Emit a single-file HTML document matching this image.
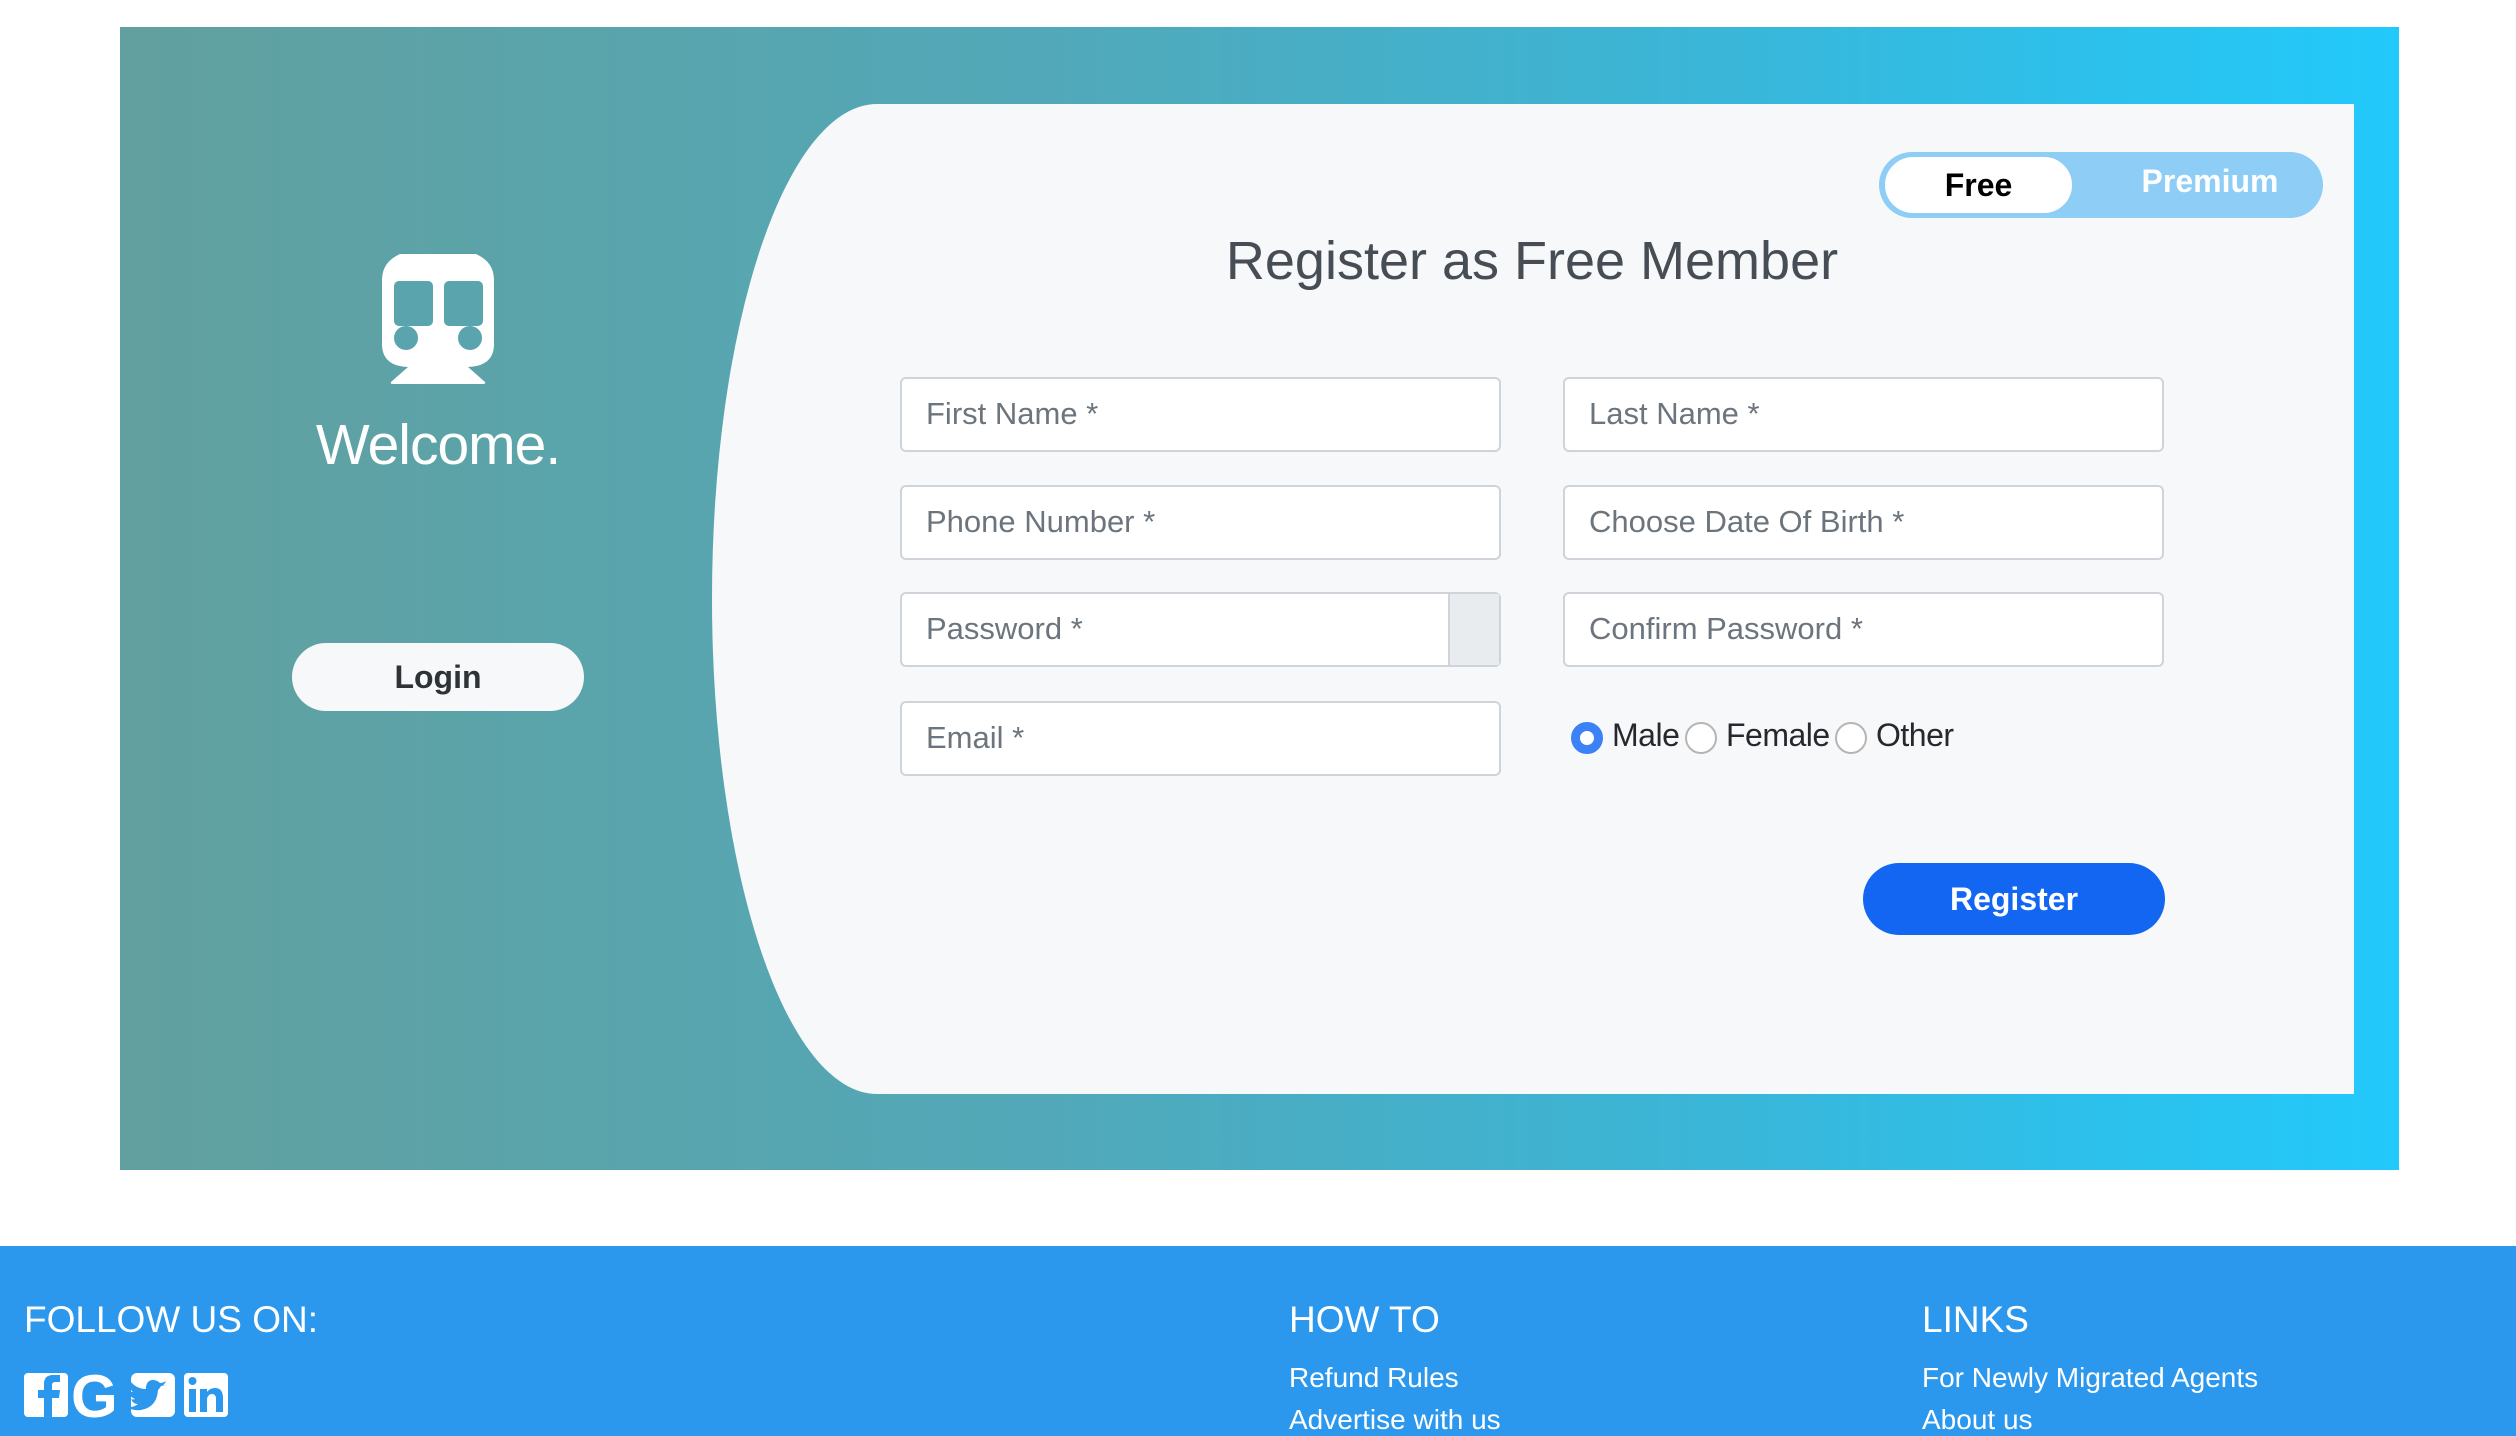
<!DOCTYPE html>
<html><head><meta charset="utf-8"><style>
*{box-sizing:border-box;margin:0;padding:0}
body{width:2516px;height:1436px;background:#fff;font-family:"Liberation Sans",sans-serif;position:relative;overflow:hidden}
.banner{position:absolute;left:120px;top:27px;width:2279px;height:1143px;background:linear-gradient(90deg,#62a09f 0%,#52a8b8 40%,#3ab6d8 70%,#22c9fb 100%)}
.card{position:absolute;left:712px;top:104px;width:1642px;height:990px;background:#f7f8fa;border-top-left-radius:165px 495px;border-bottom-left-radius:165px 495px}
.abs{position:absolute}
.welcome{left:238px;top:412px;width:400px;text-align:center;color:#fff;font-size:57px;font-weight:300;letter-spacing:-1px}
.login{left:292px;top:643px;width:292px;height:68px;border-radius:34px;background:#f7f8fa;color:#2e3338;font-weight:bold;font-size:32px;text-align:center;line-height:68px}
.toggle{left:1879px;top:152px;width:444px;height:66px;border-radius:33px;background:#8dcdf6}
.free{left:1882px;top:154px;width:193px;height:62px;border-radius:31px;background:#fff;border:3px solid #8dcdf6;text-align:center;line-height:56px;font-weight:bold;font-size:32px;color:#000}
.prem{left:2110px;top:150px;width:200px;line-height:62px;font-weight:bold;font-size:32px;color:#fff;text-align:center}
.title{left:1032px;top:230px;width:1000px;text-align:center;font-size:54px;color:#474d55;font-weight:300}
.inp{position:absolute;height:75px;width:601px;background:#fff;border:2px solid #ced4da;border-radius:6px;font-size:31px;color:#6c757d;padding-left:24px;line-height:69px}
.c1{left:900px}.c2{left:1563px}
.addon{position:absolute;right:0;top:0;width:51px;height:71px;background:#e9ecef;border-left:2px solid #ced4da}
.radio{position:absolute;top:720px;width:32px;height:32px;border-radius:50%;border:2px solid #b5b5b5;background:#fff}
.rl{position:absolute;top:717px;font-size:32px;color:#25292e;letter-spacing:-0.5px}
.reg{left:1863px;top:863px;width:302px;height:72px;border-radius:36px;background:#1266f1;color:#fff;font-weight:bold;font-size:32px;text-align:center;line-height:72px}
.footer{position:absolute;left:0;top:1246px;width:2516px;height:190px;background:#2b98ee;color:#fff}
.fh{position:absolute;top:53px;font-size:37px;font-weight:300}
.fl{position:absolute;font-size:28px;font-weight:300}
</style></head><body>
<div class="banner"></div>
<div class="card"></div>
<svg class="abs" style="left:382px;top:254px" width="112" height="130" viewBox="0 0 112 130">
<path fill="#fff" d="M18 0H94Q112 8 112 26V90Q112 112 86 113L103 128Q104 130 101 130H11Q8 130 9 128L26 113Q0 112 0 90V26Q0 8 18 0Z"/>
<rect x="12" y="27" width="39" height="45" rx="5" fill="#5aa4ad"/>
<rect x="62" y="27" width="39" height="45" rx="5" fill="#5aa4ad"/>
<circle cx="24" cy="84" r="12" fill="#5aa4ad"/>
<circle cx="88" cy="84" r="12" fill="#5aa4ad"/>
</svg>
<div class="abs welcome">Welcome.</div>
<div class="abs login">Login</div>
<div class="abs toggle"></div>
<div class="abs free">Free</div>
<div class="abs prem">Premium</div>
<div class="abs title">Register as Free Member</div>
<div class="inp c1" style="top:377px">First Name *</div>
<div class="inp c2" style="top:377px">Last Name *</div>
<div class="inp c1" style="top:485px">Phone Number *</div>
<div class="inp c2" style="top:485px">Choose Date Of Birth *</div>
<div class="inp c1" style="top:592px">Password *<div class="addon"></div></div>
<div class="inp c2" style="top:592px">Confirm Password *</div>
<div class="inp c1" style="top:701px">Email *</div>
<div class="radio" style="left:1571px;top:722px;border:9px solid #3b82f6"></div>
<div class="rl" style="left:1612px">Male</div>
<div class="radio" style="left:1685px;top:722px"></div>
<div class="rl" style="left:1726px">Female</div>
<div class="radio" style="left:1835px;top:722px"></div>
<div class="rl" style="left:1876px">Other</div>
<div class="abs reg">Register</div>
<div class="footer">
<div class="fh" style="left:24px">FOLLOW US ON:</div>
<div class="fh" style="left:1289px">HOW TO</div>
<div class="fh" style="left:1922px">LINKS</div>
<div class="fl" style="left:1289px;top:116px">Refund Rules</div>
<div class="fl" style="left:1289px;top:158px">Advertise with us</div>
<div class="fl" style="left:1922px;top:116px">For Newly Migrated Agents</div>
<div class="fl" style="left:1922px;top:158px">About us</div>
<svg class="abs" style="left:24px;top:124px" width="206" height="50" viewBox="0 0 206 50">
<rect x="0" y="3" width="44" height="44" rx="4" fill="#fff"/>
<path d="M28 47V28h7l1-8h-8v-5q0-3 3-3h5V5h-7q-9 0-9 9v6h-6v8h6v19z" fill="#2b98ee"/>
<text x="47" y="47" font-family="Liberation Sans" font-weight="bold" font-size="60" fill="#fff">G</text>
<rect x="107" y="3" width="44" height="44" rx="6" fill="#fff"/>
<path d="M143 15q-3 1-5 1 3-2 4-5-3 2-6 2-3-3-7-3-6 0-7 7v2q-9 0-15-7-3 6 2 10-2 0-4-1 0 6 6 8-2 1-4 0 2 5 7 5-5 4-12 3 7 4 15 3 16-3 17-20 2-2 3-4z" fill="#2b98ee"/>
<rect x="160" y="3" width="44" height="44" rx="4" fill="#fff"/>
<rect x="165" y="19" width="7" height="23" fill="#2b98ee"/><circle cx="168.5" cy="11" r="4" fill="#2b98ee"/>
<path d="M176 19h7v3q3-4 8-4 8 0 8 10v14h-7V29q0-5-4-5t-5 5v13h-7z" fill="#2b98ee"/>
</svg>
</div>
</body></html>
